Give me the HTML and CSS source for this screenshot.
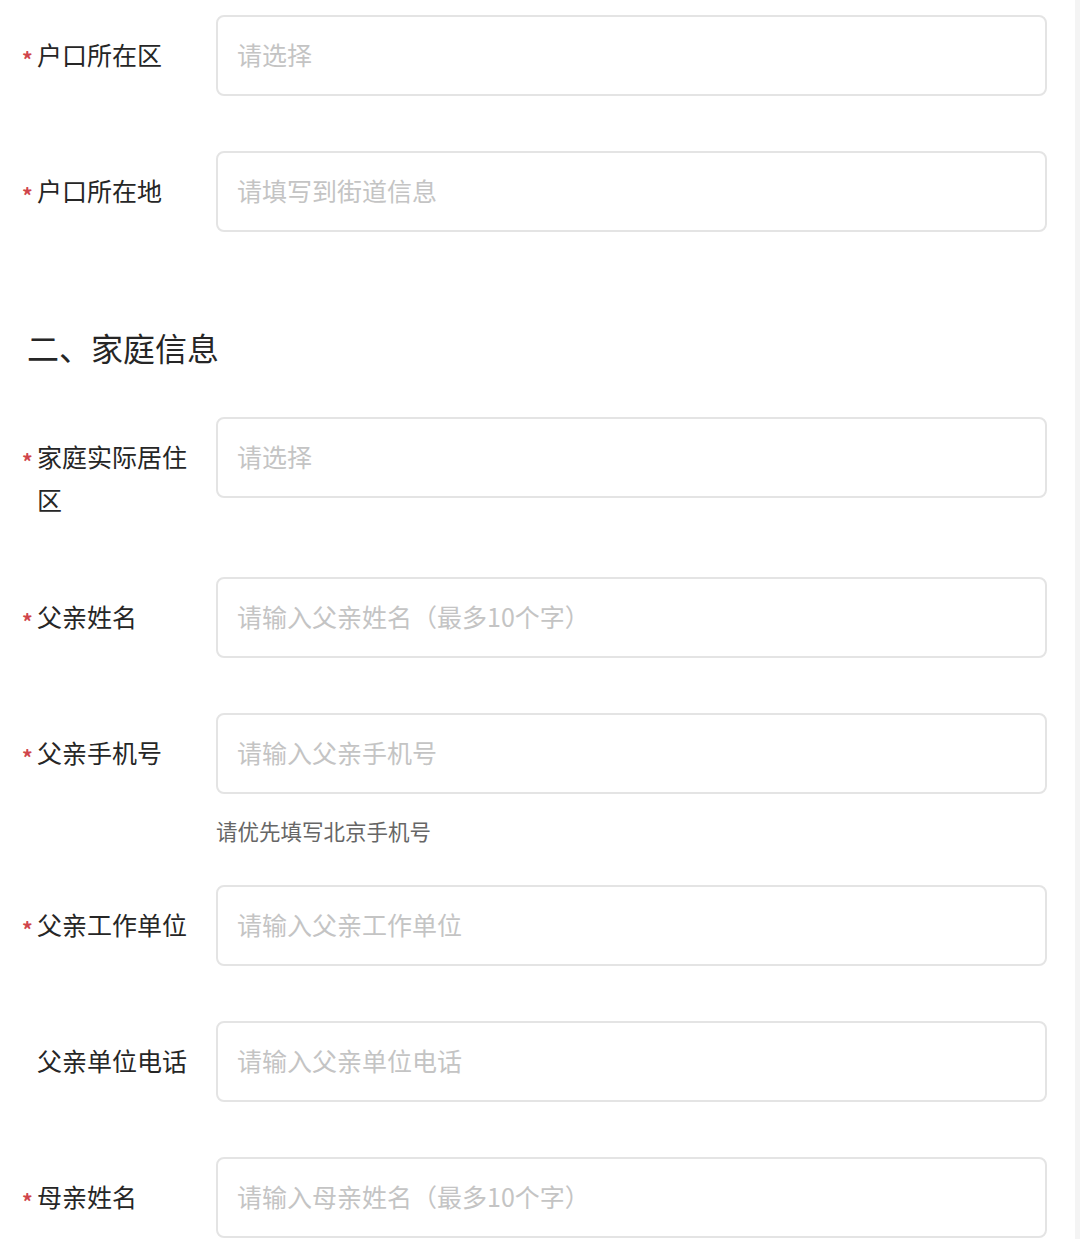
FILE: index.html
```html
<!DOCTYPE html>
<html lang="zh-CN">
<head>
<meta charset="utf-8">
<title>表单</title>
<link rel="stylesheet" href="styles.css">
</head>
<body>
<div class="page">
  <div class="row">
    <div class="label"><span class="star">*</span><span class="text">户口所在区</span></div>
    <div class="field"><input class="input" placeholder="请选择" readonly></div>
  </div>
  <div class="row">
    <div class="label"><span class="star">*</span><span class="text">户口所在地</span></div>
    <div class="field"><input class="input" placeholder="请填写到街道信息"></div>
  </div>

  <h2 class="section">二、家庭信息</h2>

  <div class="row">
    <div class="label"><span class="star">*</span><span class="text">家庭实际居住区</span></div>
    <div class="field"><input class="input" placeholder="请选择" readonly></div>
  </div>
  <div class="row">
    <div class="label"><span class="star">*</span><span class="text">父亲姓名</span></div>
    <div class="field"><input class="input" placeholder="请输入父亲姓名（最多10个字）"></div>
  </div>
  <div class="row row-help">
    <div class="label"><span class="star">*</span><span class="text">父亲手机号</span></div>
    <div class="field">
      <input class="input" placeholder="请输入父亲手机号">
      <div class="help">请优先填写北京手机号</div>
    </div>
  </div>
  <div class="row">
    <div class="label"><span class="star">*</span><span class="text">父亲工作单位</span></div>
    <div class="field"><input class="input" placeholder="请输入父亲工作单位"></div>
  </div>
  <div class="row">
    <div class="label"><span class="star"></span><span class="text">父亲单位电话</span></div>
    <div class="field"><input class="input" placeholder="请输入父亲单位电话"></div>
  </div>
  <div class="row">
    <div class="label"><span class="star">*</span><span class="text">母亲姓名</span></div>
    <div class="field"><input class="input" placeholder="请输入母亲姓名（最多10个字）"></div>
  </div>
</div>
</body>
</html>
```

FILE: styles.css
```css
html, body {
  margin: 0;
  padding: 0;
  background: #ffffff;
}

body {
  font-family: "Noto Sans CJK SC", "Noto Sans", sans-serif;
  color: #262626;
  height: 1239px;
  overflow: hidden;
}

.page {
  padding: 15px 28px 0 22px;
  border-right: 5px solid #f4f4f4;
  min-height: 1239px;
  box-sizing: border-box;
}

.row {
  display: flex;
  align-items: flex-start;
  margin-bottom: 55px;
}

.row-help {
  margin-bottom: 38px;
}

.label {
  width: 194px;
  flex: none;
  display: flex;
  align-items: flex-start;
  padding: 18px 0 1px;
}

.star {
  width: 15px;
  flex: none;
  padding-top: 5px;
  color: #d0454c;
  font-size: 21px;
  line-height: 43px;
  font-weight: 700;
  text-align: left;
}

.text {
  width: 160px;
  font-size: 25px;
  line-height: 43px;
  color: #262626;
}

.field {
  flex: 1;
  min-width: 0;
}

.input {
  display: block;
  width: 100%;
  height: 81px;
  box-sizing: border-box;
  border: 2px solid #e4e4e4;
  border-radius: 8px;
  background: #ffffff;
  padding: 0 19px 3px;
  font-family: "Noto Sans CJK SC", "Noto Sans", sans-serif;
  font-size: 25px;
  color: #333333;
  outline: none;
}

.input::placeholder {
  color: #c4c4c4;
}

.help {
  margin-top: 21px;
  font-size: 21.5px;
  line-height: 32px;
  color: #666666;
}

.section {
  margin: 93px 0 48px 5px;
  font-size: 32px;
  line-height: 44px;
  font-weight: 400;
  color: #262626;
}
```
